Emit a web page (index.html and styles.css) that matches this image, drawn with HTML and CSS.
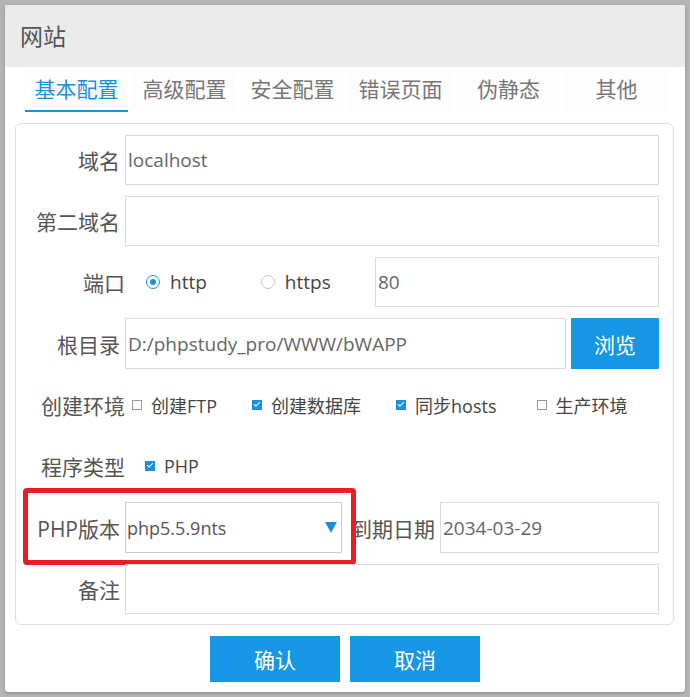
FILE: index.html
```html
<!DOCTYPE html>
<html lang="zh-CN">
<head>
<meta charset="utf-8">
<title>网站</title>
<link rel="stylesheet" href="styles.css">
</head>
<body>
<div class="dialog">
  <div class="header">网站</div>
  <div class="tabs">
    <div class="tab active">基本配置</div>
    <div class="tab">高级配置</div>
    <div class="tab">安全配置</div>
    <div class="tab">错误页面</div>
    <div class="tab">伪静态</div>
    <div class="tab">其他</div>
  </div>
  <div class="panel">
    <div class="row">
      <div class="label">域名</div>
      <div class="input grow">localhost</div>
    </div>
    <div class="row">
      <div class="label">第二域名</div>
      <div class="input grow"></div>
    </div>
    <div class="row">
      <div class="label wide">端口</div>
      <div class="radio-item first"><span class="radio on"></span><span>http</span></div>
      <div class="radio-item second"><span class="radio"></span><span>https</span></div>
      <div class="input port">80</div>
    </div>
    <div class="row tall">
      <div class="label">根目录</div>
      <div class="input grow">D:/phpstudy_pro/WWW/bWAPP</div>
      <div class="btn browse">浏览</div>
    </div>
    <div class="row">
      <div class="label wide">创建环境</div>
      <div class="checks">
        <div class="check-item"><span class="box"></span><span>创建FTP</span></div>
        <div class="check-item"><span class="box on"></span><span>创建数据库</span></div>
        <div class="check-item wide-gap"><span class="box on"></span><span>同步hosts</span></div>
        <div class="check-item"><span class="box"></span><span>生产环境</span></div>
      </div>
    </div>
    <div class="row">
      <div class="label wide">程序类型</div>
      <div class="checks php">
        <div class="check-item"><span class="box on"></span><span>PHP</span></div>
      </div>
    </div>
    <div class="row tall">
      <div class="label">PHP版本</div>
      <div class="select"><span>php5.5.9nts</span><span class="arrow"></span></div>
      <div class="label date-label">到期日期</div>
      <div class="input grow">2034-03-29</div>
      <div class="highlight"></div>
    </div>
    <div class="row">
      <div class="label">备注</div>
      <div class="input grow"></div>
    </div>
  </div>
  <div class="footer">
    <div class="btn action">确认</div>
    <div class="btn action">取消</div>
  </div>
</div>
</body>
</html>
```
FILE: styles.css
```css
* { box-sizing: border-box; }
html, body { margin: 0; padding: 0; }
body {
  background: #b4b4b4;
  font-family: "Open Sans", "Noto Sans CJK SC", sans-serif;
  width: 690px;
  height: 697px;
  overflow: hidden;
}
.dialog {
  margin: 5px;
  width: 680px;
  height: 687px;
  background: #fff;
  border-radius: 0 3px 3px 3px;
  box-shadow: 0 1px 3px rgba(0,0,0,0.25);
  overflow: hidden;
}
.header {
  height: 62px;
  background: #ebebeb;
  padding-left: 15px;
  font-size: 23px;
  line-height: 62px;
  color: #555;
}
.tabs {
  display: flex;
  gap: 5px;
  padding-left: 20px;
  height: 45px;
}
.tab {
  width: 103px;
  text-align: center;
  font-size: 21px;
  line-height: 45px;
  color: #777;
  background: #fdfdfd;
}
.tab.active {
  color: #1b8fe0;
  border-bottom: 2px solid #1b8fe0;
}
.panel {
  margin: 11px 11px 0 10px;
  border: 1px solid #ddd;
  border-radius: 6px;
  padding: 11px 14px 10px 0;
  display: flex;
  flex-direction: column;
  gap: 11px;
}
.row {
  display: flex;
  align-items: center;
  height: 50px;
  flex: none;
  position: relative;
  font-size: 19px;
  color: #444;
  white-space: nowrap;
}
.row.tall { height: 51px; }
.label {
  width: 109px;
  padding-right: 5px;
  text-align: right;
  font-size: 21px;
  color: #555;
  flex: none;
}
.label.wide { padding-right: 0; }
.input {
  height: 100%;
  border: 1px solid #dcdcdc;
  padding-left: 2px;
  font-size: 19px;
  display: flex;
  align-items: center;
  color: #666;
}
.grow { flex: 1; }
.radio-item {
  display: flex;
  align-items: center;
  gap: 10px;
  color: #444;
}
.radio-item.first { margin-left: 21px; }
.radio-item.second { margin-left: 54px; }
.radio {
  width: 14px;
  height: 14px;
  border-radius: 50%;
  border: 1px solid #c8c8c8;
  position: relative;
}
.radio.on { border-color: #1b8fe0; }
.radio.on::after {
  content: "";
  position: absolute;
  left: 3px; top: 3px;
  width: 6px; height: 6px;
  border-radius: 50%;
  background: #1b8fe0;
}
.input.port { margin-left: auto; width: 284px; }
.btn {
  background: #1796e6;
  color: #fff;
  font-size: 21px;
  display: flex;
  align-items: center;
  justify-content: center;
}
.btn.browse { width: 88px; height: 100%; margin-left: 5px; }
.checks {
  display: flex;
  align-items: center;
  margin-left: 7px;
  font-size: 18px;
}
.checks.php { margin-left: 20px; }
.check-item {
  display: flex;
  align-items: center;
  gap: 9px;
  margin-right: 35px;
  color: #444;
}
.check-item.wide-gap { margin-right: 40px; }
.box {
  width: 10px;
  height: 10px;
  border: 1px solid #999;
  position: relative;
  flex: none;
}
.box.on {
  background: #1b8fe0;
  border-color: #1b8fe0;
}
.box.on::after {
  content: "";
  position: absolute;
  left: 1px; top: 1px;
  width: 5px; height: 2px;
  border-left: 1.5px solid #fff;
  border-bottom: 1.5px solid #fff;
  transform: rotate(-45deg);
}
.select {
  width: 217px;
  height: 100%;
  border: 1px solid #ccc;
  display: flex;
  align-items: center;
  justify-content: space-between;
  padding: 0 4px 0 1px;
  font-size: 18px;
  color: #555;
}
.arrow {
  width: 0; height: 0;
  border-left: 6px solid transparent;
  border-right: 6px solid transparent;
  border-top: 11px solid #1b8fe0;
}
.date-label { width: 98px; }
.highlight {
  position: absolute;
  left: 7px;
  top: -14px;
  width: 333px;
  height: 77px;
  border: 5px solid #ec1c24;
  border-radius: 4px;
  pointer-events: none;
}
.footer {
  display: flex;
  justify-content: center;
  gap: 10px;
  margin-top: 11px;
}
.btn.action { width: 130px; height: 46px; }
```
